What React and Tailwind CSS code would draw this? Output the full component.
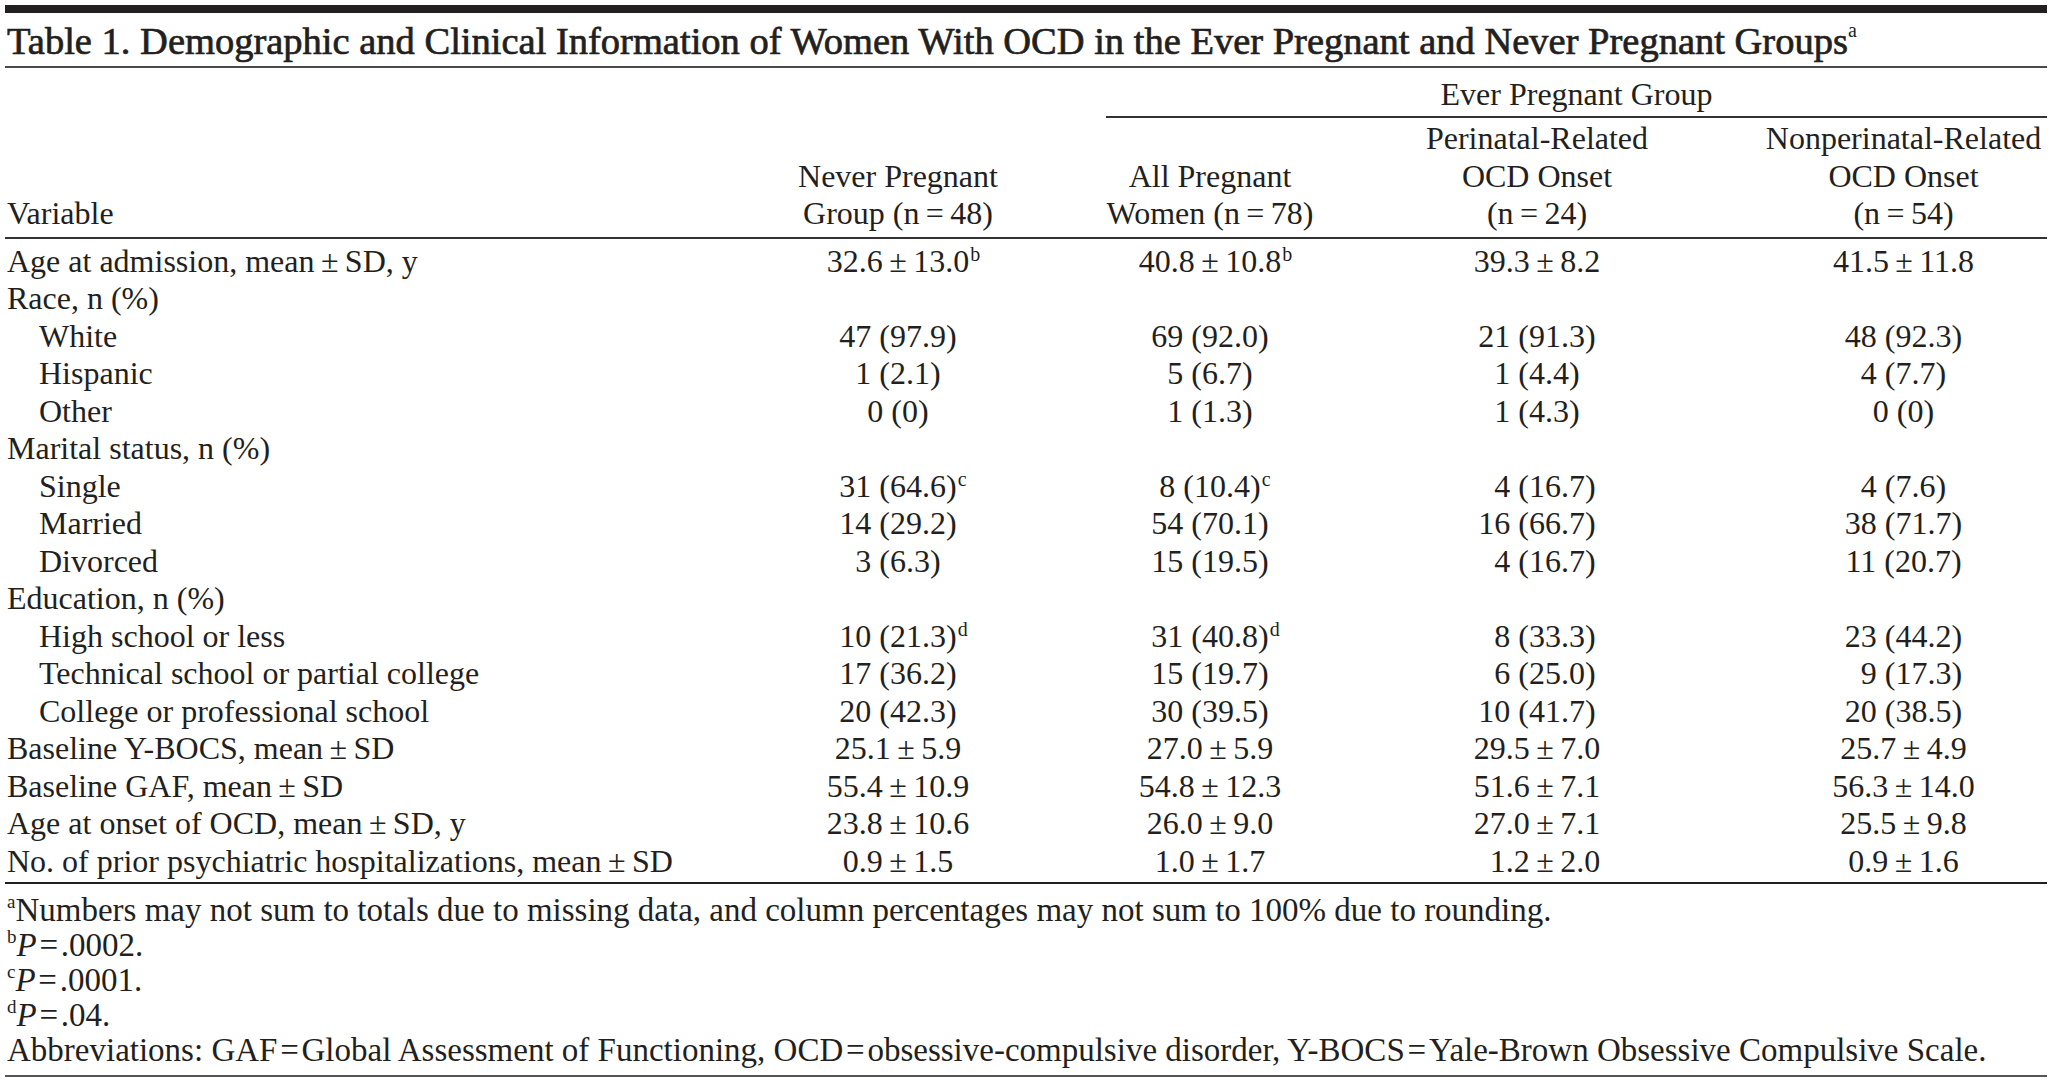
import React from "react";

const COLS = "grid grid-cols-[685px_416px_208px_446px_287px]";
const EQ = "\u200A=\u200A";

const rows = [
  { label: "Age at admission, mean\u2009±\u2009SD, y", vals: [["32.6\u2009±\u200913.0", "b"], ["40.8\u2009±\u200910.8", "b"], ["39.3\u2009±\u20098.2"], ["41.5\u2009±\u200911.8"]] },
  { label: "Race, n (%)" },
  { label: "White", indent: true, vals: [["47 (97.9)"], ["69 (92.0)"], ["21 (91.3)"], ["48 (92.3)"]] },
  { label: "Hispanic", indent: true, vals: [["1 (2.1)"], ["5 (6.7)"], ["1 (4.4)"], ["4 (7.7)"]] },
  { label: "Other", indent: true, vals: [["0 (0)"], ["1 (1.3)"], ["1 (4.3)"], ["0 (0)"]] },
  { label: "Marital status, n (%)" },
  { label: "Single", indent: true, vals: [["31 (64.6)", "c"], ["8 (10.4)", "c"], ["\u20074 (16.7)"], ["4 (7.6)"]] },
  { label: "Married", indent: true, vals: [["14 (29.2)"], ["54 (70.1)"], ["16 (66.7)"], ["38 (71.7)"]] },
  { label: "Divorced", indent: true, vals: [["3 (6.3)"], ["15 (19.5)"], ["\u20074 (16.7)"], ["11 (20.7)"]] },
  { label: "Education, n (%)" },
  { label: "High school or less", indent: true, vals: [["10 (21.3)", "d"], ["31 (40.8)", "d"], ["\u20078 (33.3)"], ["23 (44.2)"]] },
  { label: "Technical school or partial college", indent: true, vals: [["17 (36.2)"], ["15 (19.7)"], ["\u20076 (25.0)"], ["\u20079 (17.3)"]] },
  { label: "College or professional school", indent: true, vals: [["20 (42.3)"], ["30 (39.5)"], ["10 (41.7)"], ["20 (38.5)"]] },
  { label: "Baseline Y-BOCS, mean\u2009±\u2009SD", vals: [["25.1\u2009±\u20095.9"], ["27.0\u2009±\u20095.9"], ["29.5\u2009±\u20097.0"], ["25.7\u2009±\u20094.9"]] },
  { label: "Baseline GAF, mean\u2009±\u2009SD", vals: [["55.4\u2009±\u200910.9"], ["54.8\u2009±\u200912.3"], ["51.6\u2009±\u20097.1"], ["56.3\u2009±\u200914.0"]] },
  { label: "Age at onset of OCD, mean\u2009±\u2009SD, y", vals: [["23.8\u2009±\u200910.6"], ["26.0\u2009±\u20099.0"], ["27.0\u2009±\u20097.1"], ["25.5\u2009±\u20099.8"]] },
  { label: "No. of prior psychiatric hospitalizations, mean\u2009±\u2009SD", vals: [["0.9\u2009±\u20091.5"], ["1.0\u2009±\u20091.7"], ["\u20071.2\u2009±\u20092.0"], ["0.9\u2009±\u20091.6"]] },
];

function Value({ v }) {
  return (
    <div className="flex justify-center">
      <span className="relative whitespace-pre">
        {v[0]}
        {v[1] && (
          <span className="absolute left-full top-[1px] ml-[1px] text-[20px] leading-none">{v[1]}</span>
        )}
      </span>
    </div>
  );
}

export default function App() {
  return (
    <div className="w-[2055px] h-[1084px] bg-white pl-[5px] pr-[8px] pt-[5px] text-[#231f20] font-['Liberation_Serif',serif] text-[32px]">
      <div className="h-[8px] bg-[#231f20]" />
      <div className="h-[55px] pt-[4px] pl-[2px] leading-[49px] border-b-2 border-[#4a4a4a] text-[38.5px] [-webkit-text-stroke:0.7px_#231f20] whitespace-nowrap">
        Table 1. Demographic and Clinical Information of Women With OCD in the Ever Pregnant and Never Pregnant Groups
        <sup className="text-[20px] top-[-17px] [-webkit-text-stroke:0px]">a</sup>
      </div>

      <div className={COLS}>
        <div className="col-start-3 col-span-3 h-[50px] pt-[4px] leading-[44px] border-b-2 border-[#333] text-center">
          Ever Pregnant Group
        </div>
      </div>

      <div className={`${COLS} h-[121px] border-b-2 border-[#333] leading-[37.5px]`}>
        <div className="flex flex-col justify-end pb-[4.5px] pl-[2px]">Variable</div>
        <div className="flex flex-col justify-end items-center pb-[4.5px] text-center">
          <div>Never Pregnant</div>
          <div className="whitespace-pre">Group (n{"\u2009=\u2009"}48)</div>
        </div>
        <div className="flex flex-col justify-end items-center pb-[4.5px] text-center">
          <div>All Pregnant</div>
          <div className="whitespace-pre">Women (n{"\u2009=\u2009"}78)</div>
        </div>
        <div className="flex flex-col justify-end items-center pb-[4.5px] text-center">
          <div>Perinatal-Related</div>
          <div>OCD Onset</div>
          <div className="whitespace-pre">(n{"\u2009=\u2009"}24)</div>
        </div>
        <div className="flex flex-col justify-end items-center pb-[4.5px] text-center">
          <div>Nonperinatal-Related</div>
          <div>OCD Onset</div>
          <div className="whitespace-pre">(n{"\u2009=\u2009"}54)</div>
        </div>
      </div>

      <div className="pt-[3.5px] pb-[2px] border-b-2 border-[#231f20]">
        {rows.map((r, i) => (
          <div key={i} className={`${COLS} h-[37.5px] leading-[37.5px]`}>
            <div className={`whitespace-pre ${r.indent ? "pl-[34px]" : "pl-[2px]"}`}>{r.label}</div>
            {r.vals ? r.vals.map((v, j) => <Value key={j} v={v} />) : null}
          </div>
        ))}
      </div>

      <div className="pt-[8.5px] pb-[7.5px] pl-[2px] leading-[35px] text-[33px] border-b-2 border-[#555] whitespace-pre">
        <div>
          <sup className="text-[19px] top-[-13px]">a</sup>Numbers may not sum to totals due to missing data, and column percentages may not sum to 100% due to rounding.
        </div>
        <div>
          <sup className="text-[19px] top-[-13px]">b</sup><i>P</i>{EQ}.0002.
        </div>
        <div>
          <sup className="text-[19px] top-[-13px]">c</sup><i>P</i>{EQ}.0001.
        </div>
        <div>
          <sup className="text-[19px] top-[-13px]">d</sup><i>P</i>{EQ}.04.
        </div>
        <div>
          Abbreviations: GAF{EQ}Global Assessment of Functioning, OCD{EQ}obsessive-compulsive disorder, Y-BOCS{EQ}Yale-Brown Obsessive Compulsive Scale.
        </div>
      </div>
    </div>
  );
}
